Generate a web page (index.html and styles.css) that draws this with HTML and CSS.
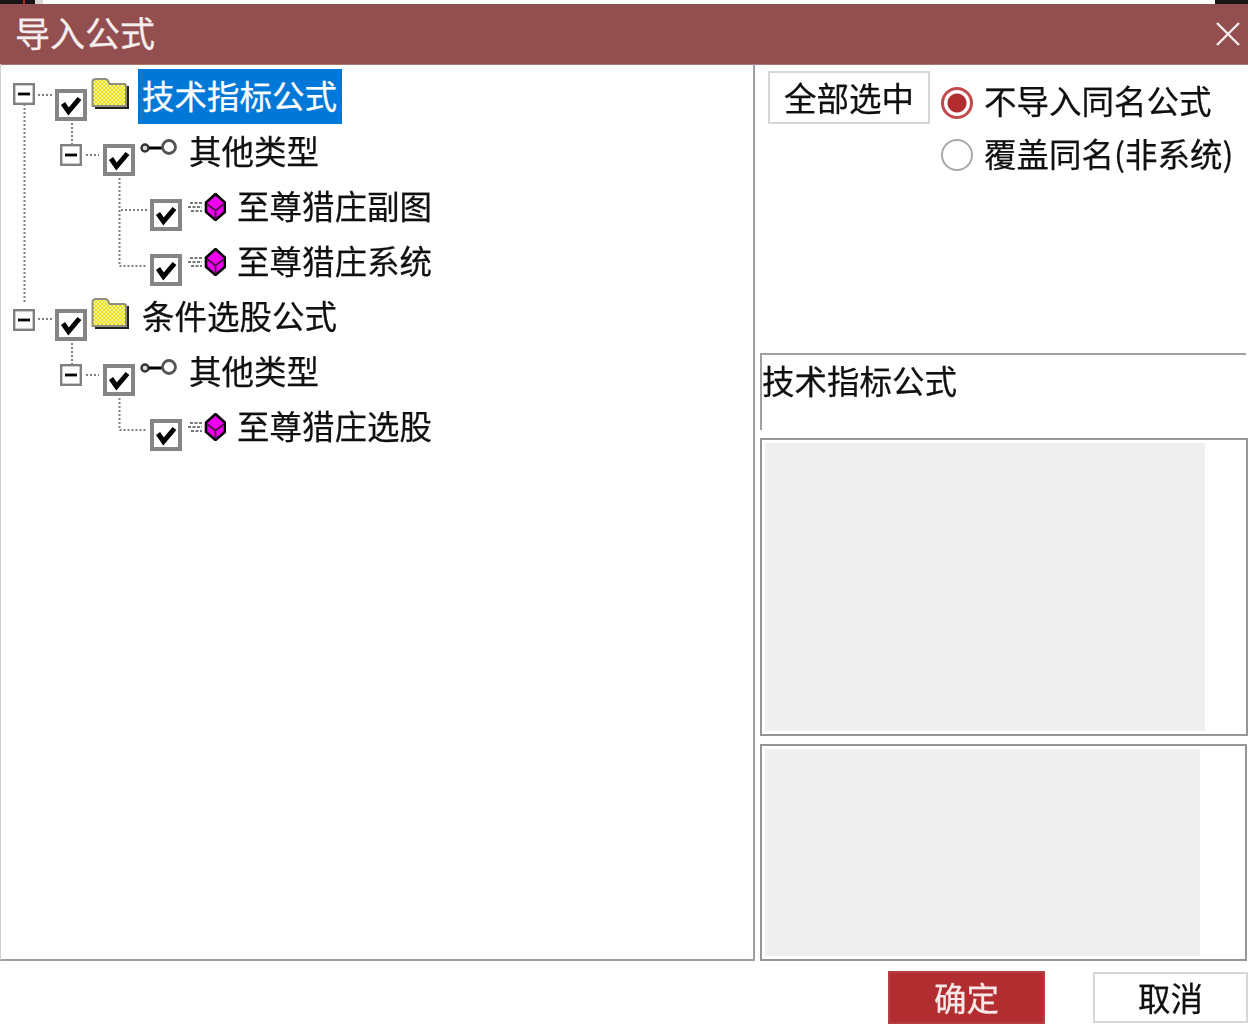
FILE: index.html
```html
<!DOCTYPE html>
<html lang="zh-CN">
<head>
<meta charset="utf-8">
<title>导入公式</title>
<link rel="stylesheet" href="styles.css">
</head>
<body>
<svg class="defs" width="0" height="0" aria-hidden="true">
  <defs>
    <pattern id="dither" width="4" height="4" patternUnits="userSpaceOnUse">
      <rect width="4" height="4" fill="#f6f4a0"/>
      <rect width="2" height="2" fill="#e6de10"/>
      <rect x="2" y="2" width="2" height="2" fill="#e6de10"/>
    </pattern>
    <symbol id="exp" viewBox="0 0 22 22">
      <rect x="1.2" y="1.2" width="19.600" height="19.600" fill="#fff" stroke="#808080" stroke-width="2.400"/>
      <rect x="5" y="9.600" width="12" height="2.800" fill="#000"/>
    </symbol>
    <symbol id="chk" viewBox="0 0 32 32">
      <rect x="2" y="2" width="28" height="28" fill="#fff" stroke="#858585" stroke-width="4"/>
      <path d="M8 14.500 L13.500 22.500 L24.500 9.500" fill="none" stroke="#000" stroke-width="5"/>
    </symbol>
    <symbol id="folder" viewBox="0 0 38 33">
      <path d="M4 32 V9 H38 V32 Z" fill="#222"/>
      <path d="M1.500 29 V5 Q1.500 2 5 2 H14 Q17 2 18 6 L18.500 7 H33 Q35 7 35 9 V29 Z" fill="url(#dither)" stroke="#8f8f80" stroke-width="2"/>
    </symbol>
    <symbol id="key" viewBox="0 0 38 20">
      <circle cx="5" cy="10" r="3.500" fill="#ddd" stroke="#333" stroke-width="2.400"/>
      <path d="M9 10 H23" stroke="#000" stroke-width="3"/>
      <circle cx="29" cy="9" r="6.500" fill="#fff" stroke="#555" stroke-width="2.800"/>
    </symbol>
    <symbol id="gem" viewBox="0 0 38 28">
      <path d="M2 10 H14 M0 14 H14 M3 18 H14" stroke="#777" stroke-width="2" stroke-dasharray="3 1.500"/>
      <path d="M27.500 1 L37 9.500 V19 L27.500 27 L18 19 V9.500 Z" fill="#f000f0" stroke="#000" stroke-width="2.600"/>
      <path d="M19 11 L27.500 17.500 L36 11 M27.500 17.500 V26" fill="none" stroke="#50104f" stroke-width="1.800"/>
    </symbol>
  </defs>
</svg>

<div class="dialog">
  <div class="backdrop">
    <span class="bd bd-black"></span><span class="bd bd-red"></span><span class="bd bd-black2"></span><span class="bd bd-white"></span><span class="bd bd-rest"></span><span class="bd bd-black3"></span>
  </div>

  <header class="titlebar">
    <span class="title">导入公式</span>
    <svg class="close" viewBox="0 0 24 24"><path d="M1 1 L23 23 M23 1 L1 23" stroke="#f4ecec" stroke-width="2.400"/></svg>
  </header>

  <main class="content">
    <section class="tree">
      <svg class="lines" width="752" height="460" viewBox="0 0 752 460">
        <g stroke="#808080" stroke-width="2" stroke-dasharray="2 2" fill="none">
          <path d="M23.500 39 V238"/>
          <path d="M37 30 H51"/>
          <path d="M71 58 V79"/>
          <path d="M85 90 H98"/>
          <path d="M118.500 113 V201 H146"/>
          <path d="M120 145 H146"/>
          <path d="M37 254 H51"/>
          <path d="M71 278 V299"/>
          <path d="M85 310 H98"/>
          <path d="M118.500 333 V365 H146"/>
        </g>
      </svg>

      <div class="row lv0">
        <svg class="exp exp-first"><use href="#exp"/></svg>
        <svg class="chk"><use href="#chk"/></svg>
        <svg class="folder"><use href="#folder"/></svg>
        <span class="label selected">技术指标公式</span>
      </div>
      <div class="row lv1">
        <svg class="exp"><use href="#exp"/></svg>
        <svg class="chk"><use href="#chk"/></svg>
        <svg class="key"><use href="#key"/></svg>
        <span class="label">其他类型</span>
      </div>
      <div class="row lv2">
        <svg class="chk"><use href="#chk"/></svg>
        <svg class="gem"><use href="#gem"/></svg>
        <span class="label">至尊猎庄副图</span>
      </div>
      <div class="row lv2">
        <svg class="chk"><use href="#chk"/></svg>
        <svg class="gem"><use href="#gem"/></svg>
        <span class="label">至尊猎庄系统</span>
      </div>
      <div class="row lv0">
        <svg class="exp"><use href="#exp"/></svg>
        <svg class="chk"><use href="#chk"/></svg>
        <svg class="folder"><use href="#folder"/></svg>
        <span class="label">条件选股公式</span>
      </div>
      <div class="row lv1">
        <svg class="exp"><use href="#exp"/></svg>
        <svg class="chk"><use href="#chk"/></svg>
        <svg class="key"><use href="#key"/></svg>
        <span class="label">其他类型</span>
      </div>
      <div class="row lv2">
        <svg class="chk"><use href="#chk"/></svg>
        <svg class="gem"><use href="#gem"/></svg>
        <span class="label">至尊猎庄选股</span>
      </div>
    </section>

    <section class="side">
      <div class="options">
        <button class="btn selectall">全部选中</button>
        <div class="radios">
          <div class="radio-row"><span class="radio on"></span><span class="radio-text first">不导入同名公式</span></div>
          <div class="radio-row"><span class="radio"></span><span class="radio-text">覆盖同名(非系统)</span></div>
        </div>
      </div>
      <div class="info">技术指标公式</div>
      <div class="panel panel-a"><div class="fill"></div></div>
      <div class="panel panel-b"><div class="fill"></div></div>
    </section>
  </main>

  <footer class="actions">
    <button class="btn primary">确定</button>
    <button class="btn cancel">取消</button>
  </footer>
</div>
</body>
</html>
```

FILE: styles.css
```css
* { box-sizing: border-box; }
html, body { margin: 0; padding: 0; background: #fff; }
body {
  width: 1248px;
  height: 1027px;
  overflow: hidden;
  font-family: "Noto Sans CJK SC", "Noto Sans", sans-serif;
  font-size: 32.5px;
  color: #101010;
  -webkit-text-stroke: 0.25px currentColor;
}
.defs { position: absolute; }
.dialog { width: 1248px; height: 1027px; display: flex; flex-direction: column; filter: blur(0.6px); }

.backdrop { height: 4px; display: flex; background: #fff; }
.bd { display: block; height: 4px; }
.bd-black { width: 23px; background: #161616; }
.bd-red { width: 2px; background: #c02030; }
.bd-black2 { width: 10px; background: #161616; }
.bd-white { width: 8px; background: #d8d8d8; }
.bd-rest { flex: 1; background: #fff; }
.bd-black3 { width: 33px; background: #161616; }

.titlebar {
  height: 61px;
  margin-bottom: -1px;
  padding: 0 8px 0 15px;
  background: #934f4f;
  display: flex;
  align-items: center;
  justify-content: space-between;
  border-bottom: 1px solid #a87474;
  color: #f6eeee;
}
.title { font-size: 35px; line-height: 56px; height: 60px; }
.close { width: 24px; height: 24px; }

.content { height: 897px; display: flex; }
.tree {
  position: relative;
  width: 755px;
  height: 897px;
  padding-top: 5px;
  border-left: 1px solid #d0d0d0;
  border-right: 2px solid #a0a0a0;
  border-bottom: 2px solid #a0a0a0;
}
.lines { position: absolute; left: 0; top: 1px; }

.row { position: relative; height: 55px; display: flex; align-items: flex-start; }
.lv0 { padding-left: 12px; }
.lv1 { padding-left: 59px; }
.lv2 { padding-left: 149px; }

.exp { width: 22px; height: 22px; margin-top: 20px; flex: none; }
.exp-first { margin-top: 14px; margin-bottom: 6px; }
.chk { width: 32px; height: 32px; margin-top: 20px; flex: none; }
.lv0 .chk { margin-left: 20px; }
.lv1 .chk { margin-left: 21px; }

.folder { width: 38px; height: 33px; margin: 8px 0 0 4px; flex: none; }
.key { width: 38px; height: 20px; margin: 14px 0 0 5px; flex: none; }
.gem { width: 38px; height: 28px; margin: 14px 0 0 6px; flex: none; }

.label { line-height: 51px; height: 55px; white-space: nowrap; margin-left: 11px; }
.lv0 .label { margin-left: 9px; padding: 0 5px 0 4px; }
.selected { background: #0078d7; color: #fff; padding-right: 6px; }

.side { width: 493px; padding-left: 5px; display: flex; flex-direction: column; }
.options { display: flex; height: 289px; padding: 7px 0 0 8px; }
.btn {
  font: inherit;
  color: inherit;
  background: #fff;
  border: 2px solid #d4d6da;
  padding: 0;
  line-height: 1;
}
.selectall { width: 162px; height: 53px; flex: none; }
.radios { margin-left: 11px; padding-top: 6px; }
.radio-row { display: flex; align-items: center; gap: 11px; height: 52px; white-space: nowrap; }
.radio-text { margin-top: -5px; }
.radio-text.first { margin-top: -8px; }
.radio { width: 32px; height: 32px; border-radius: 50%; border: 2px solid #a8a8a8; background: #fff; flex: none; }
.radio.on { border: 3px solid #c24a4e; background: radial-gradient(circle, #b12d30 0 9px, #fff 10px); }

.info {
  height: 77px;
  width: 486px;
  border-top: 2px solid #a0a0a0;
  border-left: 2px solid #a0a0a0;
  padding: 0;
  line-height: 50px;
  white-space: nowrap;
}
.panel { border: 2px solid #969696; background: #fff; padding: 3px; }
.panel-a { height: 299px; margin-top: 8px; }
.panel-b { height: 217px; margin-top: 8px; width: 487px; }
.fill { height: 100%; background: #efefef; }
.panel-a .fill { width: 440px; }
.panel-b .fill { width: 435px; }

.actions { flex: 1; display: flex; padding: 10px 0 0 888px; gap: 48px; align-items: flex-start; }
.primary { width: 157px; height: 53px; background: #b12d30; border-color: #b83e41; color: #f7e8e8; }
.cancel { width: 155px; height: 51px; margin-top: 1px; }
```
